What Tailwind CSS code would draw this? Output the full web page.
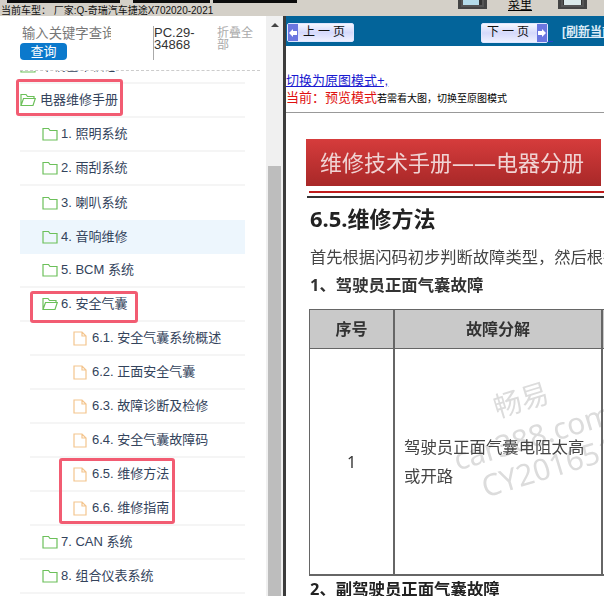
<!DOCTYPE html>
<html><head><meta charset="utf-8">
<script src="https://cdn.jsdelivr.net/npm/@tailwindcss/browser@4"></script>
</head>
<body class="m-0 bg-white">
<div class="w-[604px] h-[596px] overflow-hidden flex flex-col font-['Liberation_Sans','Noto_Sans_CJK_SC',sans-serif]">
  <!-- top strip -->
  <div class="h-[16px] shrink-0 bg-[#d4d0c8] flex flex-col">
    <div class="h-[5px] flex items-start">
      <div class="ml-[7px] w-[113px] h-[3px] bg-[#0c0c0c]"></div>
      <div class="ml-[13px] w-[77px] h-[3px] bg-[#0c0c0c]"></div>
      <div class="ml-[3px] w-[84px] h-[3px] bg-[#0c0c0c]"></div>
      <div class="ml-[161px] w-[29px] h-[9px] bg-[#555] border-x-[3px] border-b-[2px] border-[#444] flex justify-center"><div class="w-[19px] h-[5px] bg-[#b5dcea] border-r-[3px] border-[#333]"></div></div>
      <div class="ml-[21px] w-[25px] text-[12px] leading-[10px] text-black underline">菜里</div>
      <div class="ml-[25px] w-[29px] h-[9px] bg-[#555] border-x-[3px] border-b-[2px] border-[#444] flex justify-center"><div class="w-[19px] h-[5px] bg-[#dbe9ea] border-x border-[#333]"></div></div>
    </div>
    <div class="h-[11px] pl-px text-[10px] leading-[12px] text-[#111] whitespace-nowrap">当前车型： 厂家:Q-奇瑞汽车捷途X702020-2021</div>
  </div>
  <div class="flex-1 flex min-h-0">
    <!-- left pane -->
    <div class="w-[266px] shrink-0 flex flex-col min-h-0 bg-white">
      <div class="h-[54px] shrink-0 flex pl-[20px] pt-[10px]">
        <div class="w-[134px] h-[34px] border-r border-[#aaa] flex flex-col items-start">
          <div class="w-[89px] ml-[2px] overflow-hidden whitespace-nowrap text-[13.330px] leading-[16px] text-[#777]">输入关键字查询</div>
          <div class="mt-px w-[47px] h-[17px] rounded-[4px] bg-[#0b79cc] text-white text-[13px] leading-[17px] text-center">查询</div>
        </div>
        <div class="w-[63px] text-[13px] leading-[12px] text-[#333] pt-px">PC.29-<br>34868</div>
        <div class="w-[38px] text-[12px] leading-[12px] text-[#aaa] pt-px">折叠全部</div>
      </div>
      <div class="ml-[20px] mr-[6px] border-t border-dashed border-[#ccc] shrink-0"></div>
      <div class="flex-1 min-h-0 overflow-hidden pl-[20px] pr-[21px]">
        <div class="-mt-[21px]">
          <!-- clipped row -->
          <div class="h-[34px] border-b-2 border-[#f5f5f5] flex items-center">
            <svg class="mr-[4px] shrink-0" width="16" height="14" viewBox="0 0 16 14" fill="none" stroke="#6cc05a" stroke-width="1.2"><path d="M1 13V1.500h5.500L8 3.500h7V13z"/></svg>
            <span class="text-[13px] text-[#33435c]">车辆基本信息</span>
          </div>
          <div class="relative h-[34px] border-b-2 border-[#f5f5f5] flex items-center">
            <svg class="mr-[4px] shrink-0" width="16" height="14" viewBox="0 0 16 14" fill="none" stroke="#6cc05a" stroke-width="1.2"><path d="M1 12.500V1.500h5l1.500 2H14v2M1 12.500 3.500 5.500H15.300L13 12.500z"/></svg>
            <span class="text-[13px] text-[#33435c]">电器维修手册</span>
            <div class="absolute left-[-4px] top-[-5px] w-[107px] h-[37px] border-[3px] border-[#f25c72] rounded-[3px]"></div>
          </div>
          <div class="h-[34px] border-b-2 border-[#f5f5f5] flex items-center pl-[22px]">
            <svg class="mr-[3px] shrink-0" width="16" height="14" viewBox="0 0 16 14" fill="none" stroke="#6cc05a" stroke-width="1.2"><path d="M1 13V1.500h5.500L8 3.500h7V13z"/></svg>
            <span class="text-[13px] text-[#33435c]">1. 照明系统</span>
          </div>
          <div class="h-[34px] border-b-2 border-[#f5f5f5] flex items-center pl-[22px]">
            <svg class="mr-[3px] shrink-0" width="16" height="14" viewBox="0 0 16 14" fill="none" stroke="#6cc05a" stroke-width="1.2"><path d="M1 13V1.500h5.500L8 3.500h7V13z"/></svg>
            <span class="text-[13px] text-[#33435c]">2. 雨刮系统</span>
          </div>
          <div class="h-[34px] flex items-center pl-[22px]">
            <svg class="mr-[3px] shrink-0" width="16" height="14" viewBox="0 0 16 14" fill="none" stroke="#6cc05a" stroke-width="1.2"><path d="M1 13V1.500h5.500L8 3.500h7V13z"/></svg>
            <span class="text-[13px] text-[#33435c]">3. 喇叭系统</span>
          </div>
          <div class="h-[34px] bg-[#edf6fd] flex items-center pl-[22px]">
            <svg class="mr-[3px] shrink-0" width="16" height="14" viewBox="0 0 16 14" fill="none" stroke="#6cc05a" stroke-width="1.2"><path d="M1 13V1.500h5.500L8 3.500h7V13z"/></svg>
            <span class="text-[13px] text-[#33435c]">4. 音响维修</span>
          </div>
          <div class="h-[34px] border-b-2 border-[#f5f5f5] flex items-center pl-[22px]">
            <svg class="mr-[3px] shrink-0" width="16" height="14" viewBox="0 0 16 14" fill="none" stroke="#6cc05a" stroke-width="1.2"><path d="M1 13V1.500h5.500L8 3.500h7V13z"/></svg>
            <span class="text-[13px] text-[#33435c]">5. BCM 系统</span>
          </div>
          <div class="relative h-[34px] border-b-2 border-[#f5f5f5] flex items-center pl-[22px]">
            <svg class="mr-[3px] shrink-0" width="16" height="14" viewBox="0 0 16 14" fill="none" stroke="#6cc05a" stroke-width="1.2"><path d="M1 12.500V1.500h5l1.500 2H14v2M1 12.500 3.500 5.500H15.300L13 12.500z"/></svg>
            <span class="text-[13px] text-[#33435c]">6. 安全气囊</span>
            <div class="absolute left-[10px] top-[3px] w-[108px] h-[32px] border-[3px] border-[#f25c72] rounded-[3px]"></div>
          </div>
          <div class="ml-[10px] h-[34px] border-b-2 border-[#f5f5f5] flex items-center pl-[43px]">
            <svg class="mr-[5px] shrink-0" width="14" height="15" viewBox="0 0 14 15" fill="none" stroke="#f4c58e" stroke-width="1.2"><path d="M1 14V1h8l4 4v9zM9 1v4h4"/></svg>
            <span class="text-[13px] text-[#33435c]">6.1. 安全气囊系统概述</span>
          </div>
          <div class="ml-[10px] h-[34px] border-b-2 border-[#f5f5f5] flex items-center pl-[43px]">
            <svg class="mr-[5px] shrink-0" width="14" height="15" viewBox="0 0 14 15" fill="none" stroke="#f4c58e" stroke-width="1.2"><path d="M1 14V1h8l4 4v9zM9 1v4h4"/></svg>
            <span class="text-[13px] text-[#33435c]">6.2. 正面安全气囊</span>
          </div>
          <div class="ml-[10px] h-[34px] border-b-2 border-[#f5f5f5] flex items-center pl-[43px]">
            <svg class="mr-[5px] shrink-0" width="14" height="15" viewBox="0 0 14 15" fill="none" stroke="#f4c58e" stroke-width="1.2"><path d="M1 14V1h8l4 4v9zM9 1v4h4"/></svg>
            <span class="text-[13px] text-[#33435c]">6.3. 故障诊断及检修</span>
          </div>
          <div class="ml-[10px] h-[34px] border-b-2 border-[#f5f5f5] flex items-center pl-[43px]">
            <svg class="mr-[5px] shrink-0" width="14" height="15" viewBox="0 0 14 15" fill="none" stroke="#f4c58e" stroke-width="1.2"><path d="M1 14V1h8l4 4v9zM9 1v4h4"/></svg>
            <span class="text-[13px] text-[#33435c]">6.4. 安全气囊故障码</span>
          </div>
          <div class="relative ml-[10px] h-[34px] border-b-2 border-[#f5f5f5] flex items-center pl-[43px]">
            <svg class="mr-[5px] shrink-0" width="14" height="15" viewBox="0 0 14 15" fill="none" stroke="#f4c58e" stroke-width="1.2"><path d="M1 14V1h8l4 4v9zM9 1v4h4"/></svg>
            <span class="text-[13px] text-[#33435c]">6.5. 维修方法</span>
            <div class="absolute left-[29px] top-0 w-[116px] h-[66px] border-[3px] border-[#f25c72] rounded-[3px] z-10"></div>
          </div>
          <div class="ml-[10px] h-[34px] border-b-2 border-[#f5f5f5] flex items-center pl-[43px]">
            <svg class="mr-[5px] shrink-0" width="14" height="15" viewBox="0 0 14 15" fill="none" stroke="#f4c58e" stroke-width="1.2"><path d="M1 14V1h8l4 4v9zM9 1v4h4"/></svg>
            <span class="text-[13px] text-[#33435c]">6.6. 维修指南</span>
          </div>
          <div class="h-[34px] border-b-2 border-[#f5f5f5] flex items-center pl-[22px]">
            <svg class="mr-[3px] shrink-0" width="16" height="14" viewBox="0 0 16 14" fill="none" stroke="#6cc05a" stroke-width="1.2"><path d="M1 13V1.500h5.500L8 3.500h7V13z"/></svg>
            <span class="text-[13px] text-[#33435c]">7. CAN 系统</span>
          </div>
          <div class="h-[34px] border-b-2 border-[#f5f5f5] flex items-center pl-[22px]">
            <svg class="mr-[3px] shrink-0" width="16" height="14" viewBox="0 0 16 14" fill="none" stroke="#6cc05a" stroke-width="1.2"><path d="M1 13V1.500h5.500L8 3.500h7V13z"/></svg>
            <span class="text-[13px] text-[#33435c]">8. 组合仪表系统</span>
          </div>
        </div>
      </div>
    </div>
    <!-- scrollbar -->
    <div class="w-[17px] shrink-0 bg-[#f0f0f0] flex flex-col items-center">
      <div class="mt-[7px] w-0 h-0 border-x-[4px] border-x-transparent border-b-[4px] border-b-[#444]"></div>
      <div class="mt-[139px] w-[13px] flex-1 bg-[#bdbdbd]"></div>
    </div>
    <div class="w-[3px] shrink-0 bg-[#3c3c3c]"></div>
    <!-- right pane -->
    <div class="flex-1 min-w-0 flex flex-col bg-white overflow-hidden">
      <div class="h-[30px] shrink-0 bg-[#03649a] flex items-start pt-[7px] pl-px overflow-hidden whitespace-nowrap">
        <div class="w-[67px] h-[19px] shrink-0 flex rounded-[2px] border border-[#dfe6ff] bg-gradient-to-b from-[#f6f7ff] via-[#d5d9fb] to-[#eef0ff]">
          <div class="w-[10px] bg-[#6a76e0] flex items-center justify-center"><svg width="8" height="8" viewBox="0 0 8 8" fill="#fff"><path d="M0 4 4 0v2h4v4H4v2z"/></svg></div>
          <div class="flex-1 text-[12px] leading-[17px] text-center text-[#111] tracking-[3px]">上一页</div>
        </div>
        <div class="ml-[127px] w-[67px] h-[20px] shrink-0 flex rounded-[2px] border border-[#dfe6ff] bg-gradient-to-b from-[#f6f7ff] via-[#d5d9fb] to-[#eef0ff]">
          <div class="flex-1 text-[12px] leading-[17px] text-center text-[#111] tracking-[3px]">下一页</div>
          <div class="w-[10px] bg-[#6a76e0] flex items-center justify-center"><svg width="8" height="8" viewBox="0 0 8 8" fill="#fff"><path d="M8 4 4 0v2H0v4h4v2z"/></svg></div>
        </div>
        <div class="w-[5px] h-px mt-[18px] shrink-0 bg-[#2a40d0]"></div>
        <div class="ml-[9px] text-[12px] leading-[18px] font-bold text-[#dcebf7] underline">[刷新当前页]</div>
      </div>
      <div class="h-[28px] shrink-0"></div>
      <div class="text-[13px] leading-[14px] text-[#1a1ad0] underline whitespace-nowrap">切换为原图模式+,</div>
      <div class="h-[20px] shrink-0 whitespace-nowrap text-[13px] leading-[20px] text-[#e01010]">当前：预览模式<span class="text-[10px] text-black">若需看大图，切换至原图模式</span></div>
      <div class="h-[5px] shrink-0 border-b border-[#999]"></div>
      <!-- manual page -->
      <div class="relative flex-1 min-h-0 overflow-hidden blur-[0.3px] font-['Noto_Sans','Noto_Sans_CJK_SC',sans-serif]">
        <div class="absolute left-[204px] top-[281px] -rotate-[17deg] origin-top-left text-[#dcdcdc] text-[28px] leading-[28px] whitespace-nowrap">畅易</div>
        <div class="absolute left-[164px] top-[333px] -rotate-[17deg] origin-top-left text-[#dcdcdc] text-[30px] leading-[30px] whitespace-nowrap">car388.com</div>
        <div class="absolute left-[192px] top-[360px] -rotate-[17deg] origin-top-left text-[#dcdcdc] text-[30px] leading-[30px] whitespace-nowrap">CY2016518</div>
        <div class="ml-[20px] mt-[26px] w-[295px] h-[47px] bg-gradient-to-b from-[#d63c3c] to-[#a82828] text-[#f0d4d4] text-[22px] leading-[47px] pl-[14px] whitespace-nowrap">维修技术手册——电器分册</div>
        <div class="ml-[23px] mt-[5px] h-[2px] bg-[#c01c1c]"></div>
        <div class="ml-[21px] mt-[3px] h-[2px] bg-[#333]"></div>
        <div class="ml-[24px] mt-[6px] text-[22px] leading-[28px] font-bold text-[#222] whitespace-nowrap">6.5.维修方法</div>
        <div class="ml-[24px] mt-[13px] text-[16.300px] leading-[24px] text-[#444] whitespace-nowrap">首先根据闪码初步判断故障类型，然后根据</div>
        <div class="ml-[24px] mt-[4px] text-[16.400px] leading-[24px] font-bold text-[#333] whitespace-nowrap">1、驾驶员正面气囊故障</div>
        <div class="relative ml-[23px] mt-[12px] w-[400px] border-t border-b-2 border-l border-[#666] grid grid-cols-[85px_208px_107px] grid-rows-[39px_225px]">
          <div class="bg-[#c9c9c9] border-r-2 border-b border-[#666] flex items-center justify-center text-[16px] font-bold text-[#333]">序号</div>
          <div class="bg-[#c9c9c9] border-r-2 border-b border-[#666] flex items-center justify-center text-[16px] font-bold text-[#333]">故障分解</div>
          <div class="bg-[#c9c9c9] border-b border-[#666]"></div>
          <div class="border-r-2 border-[#666] flex items-center justify-center text-[16px] text-[#333]">1</div>
          <div class="border-r-2 border-[#666] flex items-center px-[9px] text-[16.400px] leading-[28.500px] text-[#444]">驾驶员正面气囊电阻太高或开路</div>
          <div></div>
        </div>
        <div class="ml-[24px] mt-px text-[16.400px] leading-[24px] font-bold text-[#222] whitespace-nowrap">2、副驾驶员正面气囊故障</div>
      </div>
    </div>
  </div>
</div>
</body></html>
